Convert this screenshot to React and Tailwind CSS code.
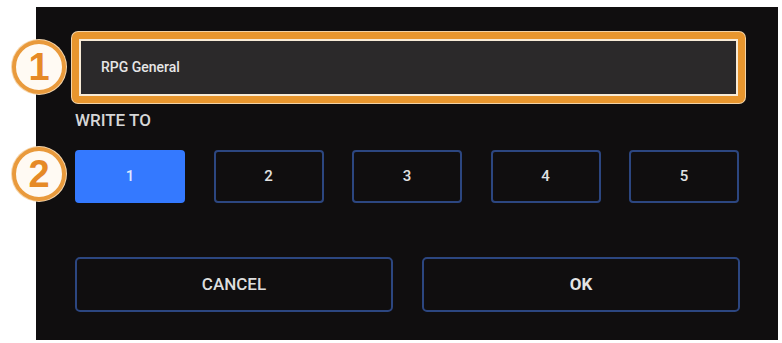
import { useState } from 'react';

const slots = ['1', '2', '3', '4', '5'];

const Marker = ({ n, className }) => (
    <div className={`absolute flex items-center justify-center w-[54px] h-[54px] rounded-full bg-[#fffaf3] border-[4px] border-[#e99a3c] ring-1 ring-[#f6d7ae] ${className}`}>
        <span className="text-[38px] leading-none font-bold text-[#e68a26] font-['Liberation_Sans',sans-serif]">{n}</span>
    </div>
);

export default function App() {
    const [slot, setSlot] = useState('1');

    return (
        <div className="relative w-[782px] h-[343px] bg-white font-['Roboto','Liberation_Sans',sans-serif]">
            <div className="ml-[36px] pt-[7px]">
                <div className="w-[742px] h-[333px] bg-[#100e0f] pt-[25px] pl-[39px]">
                    {/* name field, highlighted */}
                    <div className="-ml-[3px] w-[673px] h-[71px] rounded-[6px] bg-[#e8962e] p-[7px] ring-1 ring-[#f3d3a6]">
                        <div className="h-full border-2 border-[#f7ead6] bg-[#2b292a] flex items-center pl-[20px]">
                            <span className="text-[14px] font-medium text-[#e6e6e6]">RPG General</span>
                        </div>
                    </div>

                    <div className="mt-[7px] text-[17px] leading-[20px] font-medium text-[#d6d6d6]">WRITE TO</div>

                    <div className="mt-[20px] flex gap-[28.5px]">
                        {slots.map((s) => (
                            <button
                                key={s}
                                onClick={() => setSlot(s)}
                                className={
                                    s === slot
                                        ? 'w-[110px] h-[53px] rounded-[4px] bg-[#3479ff] text-[15px] font-medium text-[#dfe8ff]'
                                        : 'w-[110px] h-[53px] rounded-[4px] border-2 border-[#2c4680] text-[15px] font-medium text-[#e2e2e2]'
                                }
                            >
                                {s}
                            </button>
                        ))}
                    </div>

                    <div className="mt-[54px] flex gap-[29px]">
                        <button className="w-[318px] h-[55px] rounded-[5px] border-2 border-[#2c4680] text-[17px] font-medium text-[#dedede]">CANCEL</button>
                        <button className="w-[318px] h-[55px] rounded-[5px] border-2 border-[#2c4680] text-[17px] font-bold text-[#e4e4e4]">OK</button>
                    </div>
                </div>
            </div>

            <Marker n="1" className="left-[12px] top-[40px]" />
            <Marker n="2" className="left-[12px] top-[147px]" />
        </div>
    );
}
